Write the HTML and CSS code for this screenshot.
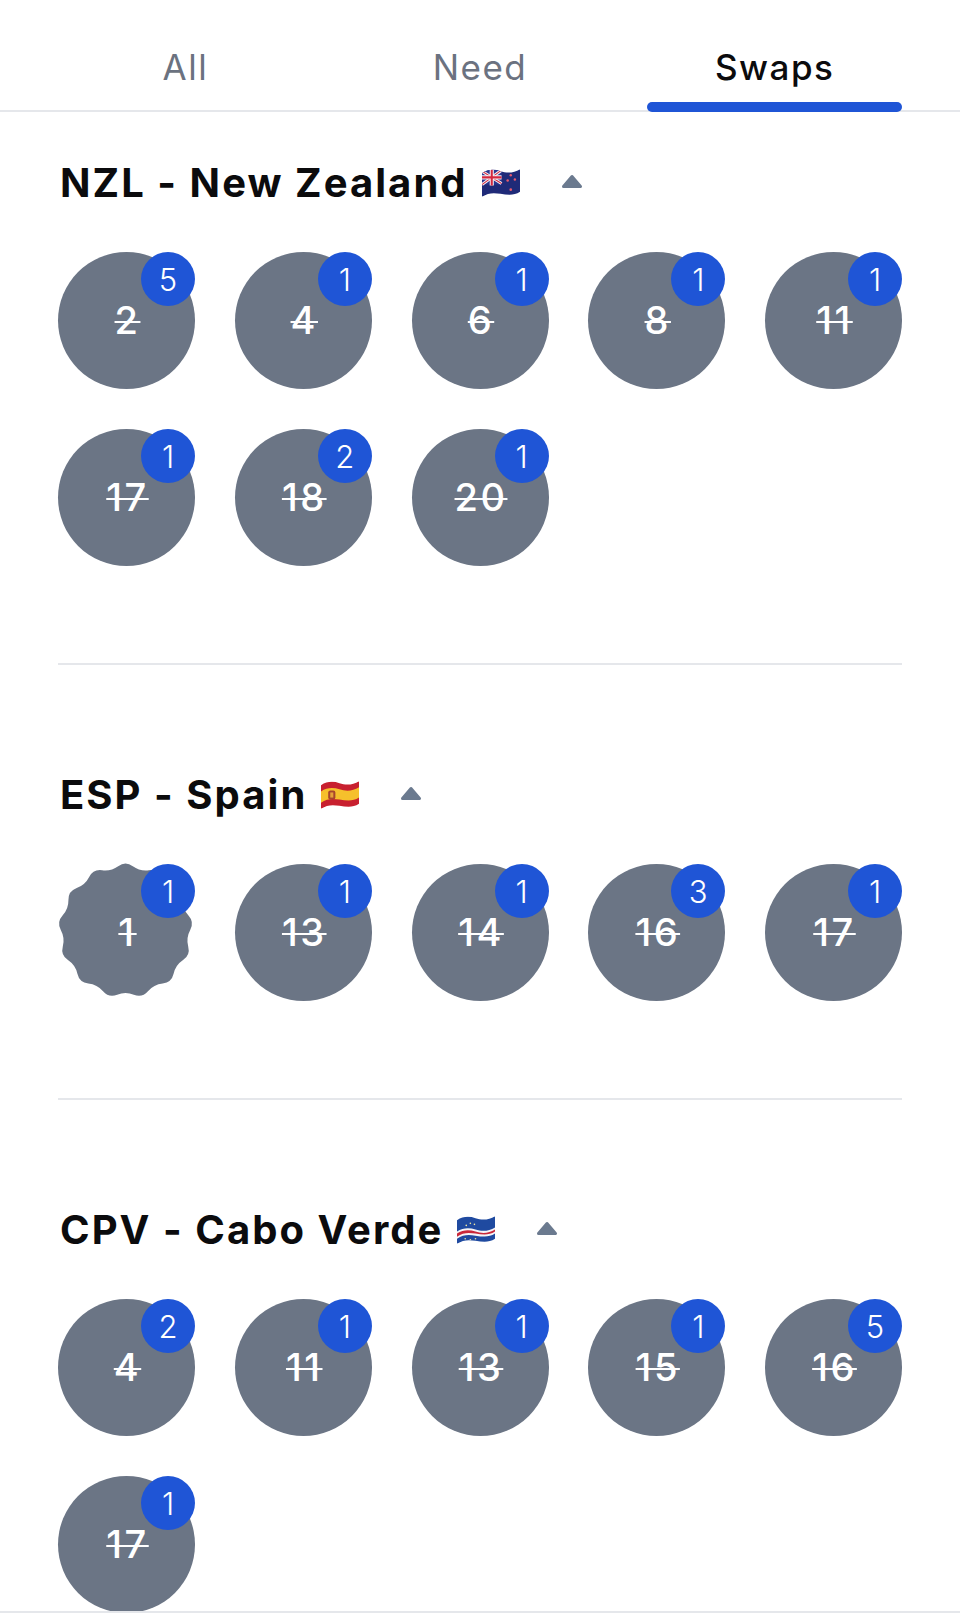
FILE: index.html
```html
<!DOCTYPE html>
<html lang="en">
<head>
    <meta charset="UTF-8">
    <title>Swaps</title>
    <link rel="stylesheet" href="styles.css">
</head>
<body>
<svg class="defs" width="0" height="0">
    <defs>
        <clipPath id="wave">
            <path d="M0 4C6 0 12 0 18 2S31 4 37 0V22C31 26 25 25 18 24S6 23 0 27Z"/>
        </clipPath>
    </defs>
</svg>
<div class="page">
    <div class="tabs">
        <a class="tab" href="#">All</a>
        <a class="tab" href="#">Need</a>
        <a class="tab active" href="#">Swaps</a>
    </div>

    <!-- NZL -->
    <div class="team">
        <div class="team-head">
            <h2>NZL - New Zealand</h2>
            <svg class="flag" viewBox="0 0 37 27">
                <g clip-path="url(#wave)">
                    <rect width="37" height="27" fill="#1f2a78"/>
                    <rect width="19" height="15" fill="#2a3590"/>
                    <path d="M0 2L19 14M19 1L0 15" stroke="#f2f2f6" stroke-width="3"/>
                    <path d="M0 2L19 14M19 1L0 15" stroke="#d5273f" stroke-width="1"/>
                    <path d="M9.500 0V16M0 8H19" stroke="#f2f2f6" stroke-width="4"/>
                    <path d="M9.500 0V16M0 8H19" stroke="#d5273f" stroke-width="2"/>
                    <circle cx="28" cy="6" r="1.200" fill="#e8596c"/>
                    <circle cx="25" cy="11" r="1.200" fill="#e8596c"/>
                    <circle cx="32" cy="10" r="1.200" fill="#e8596c"/>
                    <circle cx="28" cy="20" r="1.300" fill="#e8596c"/>
                </g>
            </svg>
            <svg class="caret" viewBox="0 0 22 15"><path d="M11 2.500L19.500 12.500H2.500Z"/></svg>
        </div>
        <div class="stickers">
            <div class="sticker"><span class="num">2</span><span class="count">5</span></div>
            <div class="sticker"><span class="num">4</span><span class="count">1</span></div>
            <div class="sticker"><span class="num">6</span><span class="count">1</span></div>
            <div class="sticker"><span class="num">8</span><span class="count">1</span></div>
            <div class="sticker"><span class="num">11</span><span class="count">1</span></div>
            <div class="sticker"><span class="num">17</span><span class="count">1</span></div>
            <div class="sticker"><span class="num">18</span><span class="count">2</span></div>
            <div class="sticker"><span class="num">20</span><span class="count">1</span></div>
        </div>
    </div>

    <!-- ESP -->
    <div class="team">
        <div class="team-head">
            <h2>ESP - Spain</h2>
            <svg class="flag" viewBox="0 0 37 27">
                <g clip-path="url(#wave)">
                    <rect width="37" height="27" fill="#c8202f"/>
                    <path d="M0 10C6 6 12 6 18 8S31 10 37 6V16C31 20 25 19 18 18S6 17 0 21Z" fill="#f6c02c"/>
                    <rect x="7" y="9" width="7" height="9" rx="2" fill="#a8452c"/>
                    <rect x="9" y="11" width="3" height="5" fill="#e5a13a"/>
                </g>
            </svg>
            <svg class="caret" viewBox="0 0 22 15"><path d="M11 2.500L19.500 12.500H2.500Z"/></svg>
        </div>
        <div class="stickers">
            <div class="sticker foil">
                <svg class="foil-shape" viewBox="-68.500 -68.500 137 137">
                    <path d="M-7.180 -63.380Q0 -68.500 7.180 -63.380Q14.360 -58.250 23.100 -59.460Q31.830 -60.660 35.810 -52.790Q39.790 -44.910 48.090 -41.910Q56.380 -38.910 56.240 -30.100Q56.100 -21.280 62.050 -14.770Q68 -8.250 63.780 -.51Q59.560 7.230 61.800 15.760Q64.050 24.290 56.720 29.190Q49.380 34.090 47.400 42.680Q45.420 51.270 36.650 52.200Q27.880 53.130 22.140 59.820Q16.390 66.510 8.200 63.260Q0 60 -8.200 63.260Q-16.390 66.510 -22.140 59.820Q-27.880 53.130 -36.650 52.200Q-45.420 51.270 -47.400 42.680Q-49.380 34.090 -56.720 29.190Q-64.050 24.290 -61.800 15.760Q-59.560 7.230 -63.780 -.51Q-68 -8.250 -62.050 -14.770Q-56.100 -21.280 -56.240 -30.100Q-56.380 -38.910 -48.090 -41.910Q-39.790 -44.910 -35.810 -52.790Q-31.830 -60.660 -23.100 -59.460Q-14.360 -58.250 -7.180 -63.380Z"/>
                </svg>
                <span class="num">1</span><span class="count">1</span>
            </div>
            <div class="sticker"><span class="num">13</span><span class="count">1</span></div>
            <div class="sticker"><span class="num">14</span><span class="count">1</span></div>
            <div class="sticker"><span class="num">16</span><span class="count">3</span></div>
            <div class="sticker"><span class="num">17</span><span class="count">1</span></div>
        </div>
    </div>

    <!-- CPV -->
    <div class="team">
        <div class="team-head">
            <h2>CPV - Cabo Verde</h2>
            <svg class="flag" viewBox="0 0 37 27">
                <g clip-path="url(#wave)">
                    <rect width="37" height="27" fill="#1f4aa0"/>
                    <path d="M0 15C6 11 12 11 18 13S31 15 37 11V17C31 21 25 20 18 19S6 18 0 22Z" fill="#f4f4f6"/>
                    <path d="M0 17C6 13 12 13 18 15S31 17 37 13V15C31 19 25 18 18 17S6 16 0 20Z" fill="#c9283a"/>
                    <g fill="#f0e6a0">
                        <circle cx="9" cy="9" r=".8"/><circle cx="13" cy="7" r=".8"/><circle cx="17" cy="8" r=".8"/>
                        <circle cx="8" cy="22" r=".8"/><circle cx="13" cy="23" r=".8"/><circle cx="18" cy="22" r=".8"/>
                    </g>
                </g>
            </svg>
            <svg class="caret" viewBox="0 0 22 15"><path d="M11 2.500L19.500 12.500H2.500Z"/></svg>
        </div>
        <div class="stickers">
            <div class="sticker"><span class="num">4</span><span class="count">2</span></div>
            <div class="sticker"><span class="num">11</span><span class="count">1</span></div>
            <div class="sticker"><span class="num">13</span><span class="count">1</span></div>
            <div class="sticker"><span class="num">15</span><span class="count">1</span></div>
            <div class="sticker"><span class="num">16</span><span class="count">5</span></div>
            <div class="sticker"><span class="num">17</span><span class="count">1</span></div>
        </div>
    </div>

    <div class="bottom-bar"></div>
</div>
</body>
</html>
```

FILE: styles.css
```css
/* reset */
body,h2{margin:0;padding:0}
a{text-decoration:none}
body{font-family:Inter,"Liberation Sans",sans-serif;background:#fff;color:#0b0b0d}

.defs{position:absolute}
.page{
    position:relative;
    height:1622px;
    overflow:hidden;
}

/* tabs */
.tabs{
    display:flex;
    gap:40px;
    height:110px;
    padding:0 58px;
    border-bottom:2px solid #e5e7eb;
}
.tab{
    position:relative;
    flex:1;
    display:flex;
    align-items:center;
    justify-content:center;
    padding-top:24px;
    height:86px;
    font-size:35px;
    letter-spacing:1.5px;
    color:#6b7280;
}
.tab.active{
    color:#0b0b0d;
    font-weight:500;
}
.tab.active::after{
    content:"";
    position:absolute;
    left:0;
    right:0;
    top:102px;
    height:10px;
    border-radius:5px;
    background:#1f55d6;
}

/* team block */
.team{
    margin:0 58px 105px;
    padding:0 0 97px;
    border-bottom:2px solid #e5e7eb;
}
.tabs + .team{padding-top:46px}
.team-head{
    display:flex;
    align-items:center;
    height:50px;
    margin-bottom:44px;
}
.team-head h2{
    font-size:40px;
    font-weight:700;
    letter-spacing:2.05px;
    padding-left:2px;
    margin-top:-2px;
}
.flag{
    width:38px;
    height:28px;
    margin-left:14px;
}
.caret{
    width:22px;
    height:15px;
    margin-left:41px;
    margin-bottom:4px;
    fill:#6b7a8f;
    stroke:#6b7a8f;
    stroke-width:3;
    stroke-linejoin:round;
}

/* sticker grid */
.stickers{
    display:grid;
    grid-template-columns:repeat(5,137px);
    justify-content:space-between;
    row-gap:40px;
}
.sticker{
    position:relative;
    width:137px;
    height:137px;
    border-radius:50%;
    background:#6b7585;
    display:flex;
    align-items:center;
    justify-content:center;
}
.sticker.foil{
    background:none;
}
.foil-shape{
    position:absolute;
    left:-2px;
    top:-3px;
    width:139px;
    height:139px;
    fill:#6b7585;
}
.num{
    position:relative;
    font-size:38px;
    font-weight:500;
    letter-spacing:2.5px;
    padding:0 0 2px 2px;
    color:#fff;
    text-decoration:line-through;
    text-decoration-thickness:2px;
}
.count{
    position:absolute;
    top:0;
    right:0;
    width:54px;
    height:54px;
    border-radius:50%;
    background:#1f55d6;
    color:#fff;
    font-size:31px;
    font-weight:300;
    display:flex;
    align-items:center;
    justify-content:center;
}

.bottom-bar{
    position:absolute;
    left:0;
    right:0;
    top:1611px;
    bottom:0;
    background:#fff;
    border-top:2px solid #e5e7eb;
}
```
